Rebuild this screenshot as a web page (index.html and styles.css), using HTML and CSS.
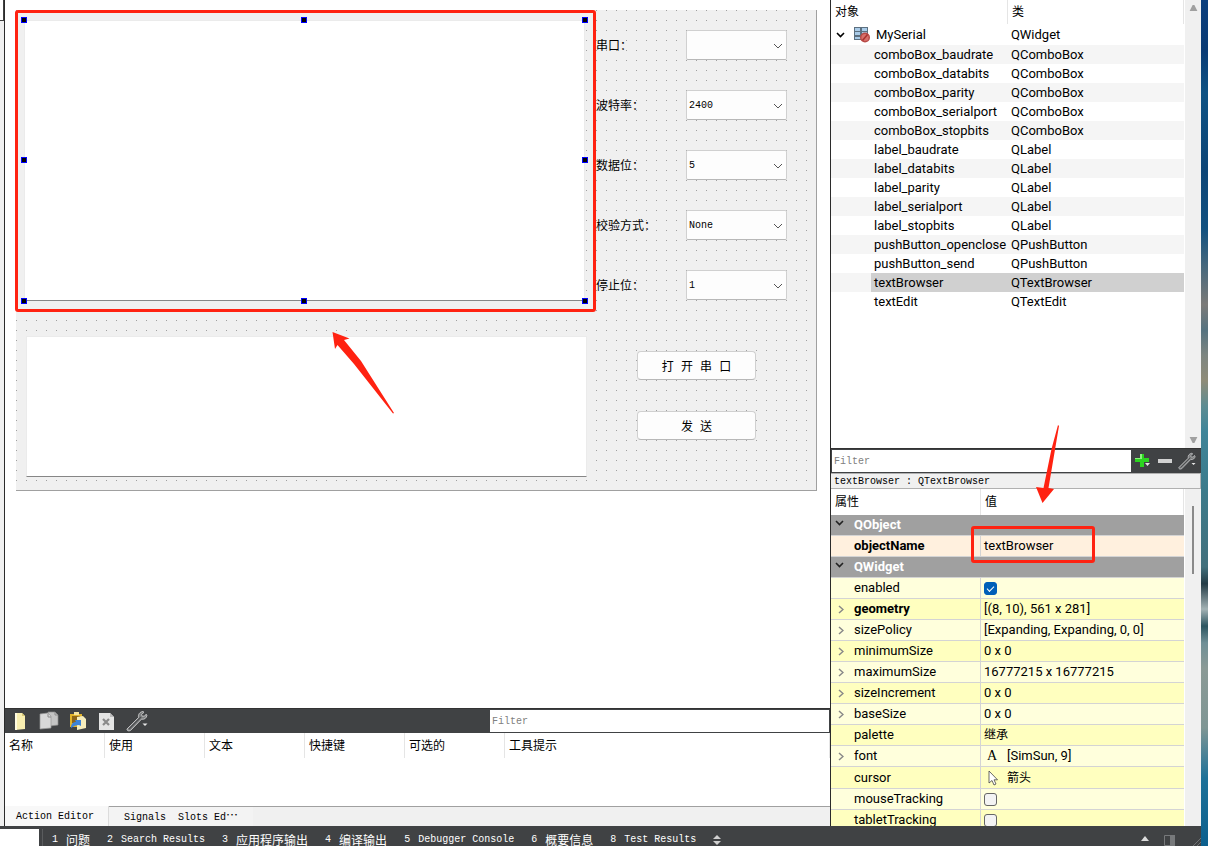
FILE: index.html
```html
<!DOCTYPE html>
<html lang="zh-CN">
<head>
<meta charset="utf-8">
<title>MySerial - Qt Creator</title>
<link rel="stylesheet" href="styles.css">
</head>
<body>
<svg class="defs" width="0" height="0" aria-hidden="true">
  <symbol id="down" viewBox="0 0 10 6"><path d="M1 1l4 4 4-4" fill="none" stroke="currentColor"/></symbol>
  <symbol id="open" viewBox="0 0 9 6"><path d="M1 1l3.500 3.500L8 1" fill="none" stroke="currentColor" stroke-width="1.600"/></symbol>
  <symbol id="closed" viewBox="0 0 6 9"><path d="M1 1l4 3.500L1 8" fill="none" stroke="currentColor" stroke-width="1.500"/></symbol>
  <symbol id="wrench" viewBox="0 0 22 22">
    <path d="M1 19 12.500 7.500C12 4.500 13.500 2 17 1.500l1 .8-2.500 2.200.8 1.800 2.500-.3 1.300-1.800.8 1c-.2 2.800-2.500 4.500-5.400 4L4.500 20.500C2.500 21.500.5 20.500 1 19z" fill="#7d7f80" stroke="#c9cacb" stroke-width=".9"/>
    <path d="M3 19 15 7" stroke="#4c4e50" stroke-width="1.200"/>
    <path d="M16.500 13.500h5l-2.500 2.500z" fill="#e6e6e6"/>
  </symbol>
</svg>
<div class="window">
  <main class="workspace">
    <div class="rail"><div class="rail-tab"></div></div>
    <div class="editor">
      <section class="canvas" aria-label="MySerial">
        <div class="form">
          <div class="form-left">
            <div class="browser selected">
              <textarea readonly aria-label="textBrowser"></textarea>
              <i class="handle n w"></i><i class="handle n c"></i><i class="handle n e"></i>
              <i class="handle m w"></i><i class="handle m e"></i>
              <i class="handle s w"></i><i class="handle s c"></i><i class="handle s e"></i>
              <div class="mark"></div>
            </div>
            <div class="edit">
              <textarea aria-label="textEdit"></textarea>
              <svg class="arrow-form" viewBox="0 0 64 84" width="64" height="84"><path d="M.5 1 17.500 7.500 12 9 29 30 62 82 61 82.500 22 33 5.500 14 3 18z" fill="#ff2211"/></svg>
            </div>
          </div>
          <div class="form-right">
            <div class="field"><label for="port">串口：</label><span class="combo"><select id="port"><option></option></select><svg width="10" height="6"><use href="#down"/></svg></span></div>
            <div class="field"><label for="baud">波特率：</label><span class="combo"><select id="baud"><option>2400</option></select><svg width="10" height="6"><use href="#down"/></svg></span></div>
            <div class="field"><label for="data">数据位：</label><span class="combo"><select id="data"><option>5</option></select><svg width="10" height="6"><use href="#down"/></svg></span></div>
            <div class="field"><label for="parity">校验方式：</label><span class="combo"><select id="parity"><option>None</option></select><svg width="10" height="6"><use href="#down"/></svg></span></div>
            <div class="field"><label for="stop">停止位：</label><span class="combo"><select id="stop"><option>1</option></select><svg width="10" height="6"><use href="#down"/></svg></span></div>
            <div class="buttons">
              <button class="push" type="button">打 开 串 口</button>
              <button class="push" type="button">发 送</button>
            </div>
          </div>
        </div>
      </section>
      <section class="actions">
        <div class="toolbar">
          <div class="tools">
            <button type="button" aria-label="新建"><svg width="20" height="20" viewBox="0 0 20 20"><path d="M5 2h7l3 3v13l-10 1z" fill="#f8eeb0"/><path d="M5 2h2v17H5z" fill="#fffbe0"/><path d="M12 2l3 3h-3z" fill="#d8c874"/></svg></button>
            <button type="button" aria-label="复制"><svg width="20" height="20" viewBox="0 0 20 20"><path d="M9 1h7l3 3v10l-8 1z" fill="#c4c4c4" stroke="#8c8c8c" stroke-width=".7"/><path d="M1 3l8-1 3 3v12l-11 1z" fill="#d8d8d8" stroke="#999" stroke-width=".7"/><path d="M9 3v3h3M16 1v3h3" fill="none" stroke="#8c8c8c"/></svg></button>
            <button type="button" aria-label="粘贴"><svg width="20" height="20" viewBox="0 0 20 20"><path d="M2 3h12v13H2z" fill="#e3b42a"/><path d="M6 1h5v3H6z" fill="#f4e3a0"/><path d="M4 5h8v7H4z" fill="#8d6518"/><path d="M9 6l6-1 3 3v9l-9 2z" fill="#f6edbc"/><path d="M3 17c0-4 2-6 5-6L7 9h6v6l-2-1c-3 0-5 1-8 3z" fill="#3c83d8"/></svg></button>
            <button type="button" aria-label="删除"><svg width="20" height="20" viewBox="0 0 20 20"><path d="M2 2h11l4 4v13H2z" fill="#e4e4e4"/><path d="M13 2v4h4" fill="#bbb"/><path d="M6 8l6 6M12 8l-6 6" stroke="#8a8a8a" stroke-width="2.200"/></svg></button>
            <button type="button" aria-label="配置"><svg width="22" height="22"><use href="#wrench"/></svg></button>
          </div>
          <input class="filter" type="text" placeholder="Filter" aria-label="Filter actions">
        </div>
        <table class="action-head"><thead><tr><th>名称</th><th>使用</th><th>文本</th><th>快捷键</th><th>可选的</th><th>工具提示</th></tr></thead></table>
        <div class="tabs" role="tablist">
          <button class="tab active" role="tab" type="button">Action Editor</button>
          <button class="tab" role="tab" type="button">Signals&nbsp; Slots Ed<span>⋯</span></button>
        </div>
      </section>
    </div>
    <aside class="side">
      <section class="tree">
        <div class="scroll-area">
        <table class="objects">
          <colgroup><col class="name"><col></colgroup>
          <thead><tr><th>对象</th><th>类</th></tr></thead>
          <tbody>
          <tr class="root"><td><div class="root-cell"><svg class="chev" width="9" height="6"><use href="#open"/></svg><svg width="16" height="16" viewBox="0 0 16 16"><path d="M0 0h14v13H0z" fill="#5c7080"/><path d="M1 1h5v3H1zM8 1h5v3H8zM1 5h5v3H1zM8 5h5v3H8zM1 10h6v2H1z" fill="#a9cbe8"/><circle cx="11" cy="10.500" r="4.300" fill="#d8706b" stroke="#b84a46" stroke-width="1.400"/><path d="M8.500 13.500l5-6" stroke="#a8312e" stroke-width="1.500"/></svg>MySerial</div></td><td>QWidget</td></tr>
          <tr><td>comboBox_baudrate</td><td>QComboBox</td></tr>
          <tr><td>comboBox_databits</td><td>QComboBox</td></tr>
          <tr><td>comboBox_parity</td><td>QComboBox</td></tr>
          <tr><td>comboBox_serialport</td><td>QComboBox</td></tr>
          <tr><td>comboBox_stopbits</td><td>QComboBox</td></tr>
          <tr><td>label_baudrate</td><td>QLabel</td></tr>
          <tr><td>label_databits</td><td>QLabel</td></tr>
          <tr><td>label_parity</td><td>QLabel</td></tr>
          <tr><td>label_serialport</td><td>QLabel</td></tr>
          <tr><td>label_stopbits</td><td>QLabel</td></tr>
          <tr><td>pushButton_openclose</td><td>QPushButton</td></tr>
          <tr><td>pushButton_send</td><td>QPushButton</td></tr>
          <tr class="current"><td>textBrowser</td><td>QTextBrowser</td></tr>
          <tr><td>textEdit</td><td>QTextEdit</td></tr>
          </tbody>
        </table>
        </div>
        <div class="scrollbar"><svg width="9" height="6" viewBox="0 0 9 7"><path d="M3.500 0h2L9 7H0z" fill="#a0a0a0"/></svg><svg width="9" height="6" viewBox="0 0 9 7"><path d="M0 0h9L5.500 7h-2z" fill="#a0a0a0"/></svg></div>
      </section>
      <div class="prop-bar">
        <input class="filter" type="text" placeholder="Filter" aria-label="Filter properties">
        <button type="button" aria-label="添加"><svg width="18" height="18" viewBox="0 0 18 18"><path d="M6 2h4v4h5v4h-5v5H6v-5H1V6h5z" fill="#2bd41f"/><path d="M6 2h2v5H1V6h5z" fill="#8bf07e"/><path d="M11 11h5l-2.500 3z" fill="#e6e6e6"/></svg></button>
        <button type="button" aria-label="移除"><svg width="16" height="16" viewBox="0 0 16 16"><path d="M1 6h14v4H1z" fill="#d2d2d2"/></svg></button>
        <button type="button" aria-label="配置"><svg width="18" height="18"><use href="#wrench"/></svg></button>
      </div>
      <div class="object-line">textBrowser : QTextBrowser</div>
      <section class="props">
        <div class="prop-area">
        <table class="properties">
          <colgroup><col class="name"><col></colgroup>
          <thead><tr><th>属性</th><th>值</th></tr></thead>
          <tbody>
          <tr class="group"><th colspan="2"><svg class="chev" width="9" height="6"><use href="#open"/></svg>QObject</th></tr>
          <tr class="peach"><td class="bold">objectName</td><td class="marked">textBrowser<div class="mark"></div><svg class="arrow-prop" viewBox="0 0 26 80" width="26" height="80"><path d="M23 0 24 1 13.500 63 19 64 7.500 78 1 62 8.500 63 16.500 24z" fill="#ff2211"/></svg></td></tr>
          <tr class="group"><th colspan="2"><svg class="chev" width="9" height="6"><use href="#open"/></svg>QWidget</th></tr>
          <tr><td><label for="enabled">enabled</label></td><td><input id="enabled" type="checkbox" checked></td></tr>
          <tr><td class="bold"><svg class="chev" width="6" height="9"><use href="#closed"/></svg>geometry</td><td>[(8, 10), 561 x 281]</td></tr>
          <tr><td><svg class="chev" width="6" height="9"><use href="#closed"/></svg>sizePolicy</td><td>[Expanding, Expanding, 0, 0]</td></tr>
          <tr><td><svg class="chev" width="6" height="9"><use href="#closed"/></svg>minimumSize</td><td>0 x 0</td></tr>
          <tr><td><svg class="chev" width="6" height="9"><use href="#closed"/></svg>maximumSize</td><td>16777215 x 16777215</td></tr>
          <tr><td><svg class="chev" width="6" height="9"><use href="#closed"/></svg>sizeIncrement</td><td>0 x 0</td></tr>
          <tr><td><svg class="chev" width="6" height="9"><use href="#closed"/></svg>baseSize</td><td>0 x 0</td></tr>
          <tr><td>palette</td><td class="zh">继承</td></tr>
          <tr><td><svg class="chev" width="6" height="9"><use href="#closed"/></svg>font</td><td><div class="with-icon"><span class="serif-a">A</span>[SimSun, 9]</div></td></tr>
          <tr class="tall"><td>cursor</td><td class="zh"><div class="with-icon"><svg width="16" height="16" viewBox="0 0 16 16"><path d="M5 1v12l3-2.500 2 4.500 2-1-2-4.200h3.500z" fill="#fff" stroke="#444" stroke-width=".8"/></svg>箭头</div></td></tr>
          <tr><td><label for="mouse">mouseTracking</label></td><td><input id="mouse" type="checkbox"></td></tr>
          <tr><td><label for="tablet">tabletTracking</label></td><td><input id="tablet" type="checkbox"></td></tr>
          </tbody>
        </table>
        </div>
        <div class="scrollbar thin"><div class="thumb"></div></div>
      </section>
    </aside>
  </main>
  <footer class="status">
    <input class="locator" type="text" aria-label="Locator">
    <nav class="panes">
      <button type="button">1<span>问题</span></button>
      <button type="button">2<span class="latin">Search Results</span></button>
      <button type="button">3<span>应用程序输出</span></button>
      <button type="button">4<span>编译输出</span></button>
      <button type="button">5<span class="latin">Debugger Console</span></button>
      <button type="button">6<span>概要信息</span></button>
      <button type="button">8<span class="latin">Test Results</span></button>
      <button type="button" aria-label="更多"><svg width="8" height="10" viewBox="0 0 8 10"><path d="M4 0l4 4H0zM0 6h8l-4 4z" fill="#d0d0d0"/></svg></button>
    </nav>
    <div class="corner">
      <svg width="8" height="5" viewBox="0 0 8 5"><path d="M4 0l4 5H0z" fill="#dcdcdc"/></svg>
      <svg width="11" height="11" viewBox="0 0 11 11"><path d="M.5.5h10v10H.5z" fill="none" stroke="#77797b"/><path d="M6 0h5v11H6z" fill="#77797b"/></svg>
      <svg class="grip" width="8" height="8" viewBox="0 0 8 8"><path d="M0 8l8-8M4 8l4-4" stroke="#707274"/></svg>
    </div>
  </footer>
</div>
<div class="wallpaper"></div>
</body>
</html>
```
FILE: styles.css
```css
* { box-sizing: border-box; }
body {
  margin: 0;
  height: 100vh;
  display: flex;
  overflow: hidden;
  background: #fff;
  color: #000;
  font: 13px/18px Roboto, "Noto Sans CJK SC", sans-serif;
}
button, input, select, textarea { font: inherit; color: inherit; margin: 0; padding: 0; border: 0; border-radius: 0; background: none; outline: 0; }
svg { display: block; flex: none; }
.defs { position: absolute; }
table { border-collapse: separate; border-spacing: 0; table-layout: fixed; width: 100%; }
th, td { padding: 0; text-align: left; font-weight: 400; white-space: nowrap; }

.window { flex: 1; min-width: 0; display: flex; flex-direction: column; }
.wallpaper {
  width: 7px;
  background: linear-gradient(#0b3f7d 0, #0a3b74 6%, #0e5283 11%, #0d4576 20%, #11507f 27%, #4c6a7c 32%, #7b7a78 36%, #55727f 39%, #7d8580 42%, #8f8c78 45%, #5d8c92 48%, #3f8599 51%, #3c7a8a 58%, #42707c 67%, #243c46 69%, #a3b2b4 72%, #2c5560 74%, #6f8f96 76%, #8b9a96 79%, #7f9694 86%, #1d7198 92%, #0c5f8d 100%);
}
.workspace { flex: 1; min-height: 0; display: flex; }
.rail { width: 5px; background: #f0f0f0; border-right: 1px solid #2b2b2b; }
.rail-tab { height: 21px; background: #fff; border: solid #404040; border-width: 0 1px 1px 0; }
.editor { flex: 1; min-width: 0; display: flex; flex-direction: column; }

/* form being designed */
.canvas { flex: 1; min-height: 0; padding: 10px 13px 0 11px; }
.form {
  display: flex;
  gap: 9px;
  padding: 10px 0 13px 8px;
  border: solid #a0a0a0;
  border-width: 0 1px 1px 0;
  background-color: #f0f0f0;
  background-image: linear-gradient(to right, transparent 1px, #f0f0f0 1px), linear-gradient(#a0a0a0 1px, #f0f0f0 1px);
  background-size: 10px 10px;
  font: 12px/18px "Liberation Mono", "Noto Sans CJK SC", monospace;
}
.form-left { flex: 1; min-width: 0; display: flex; flex-direction: column; gap: 35px; }
.browser, .edit { position: relative; }
.browser { margin-right: 2px; }
.edit { margin-left: 2px; }
textarea { display: block; width: 100%; resize: none; background: #fff; border: 1px solid #ebebeb; border-bottom-color: #868686; }
.browser textarea { height: 281px; }
.edit textarea { height: 141px; }
.handle { position: absolute; width: 6px; height: 6px; background: #000; border: 1px solid #00f; }
.handle.n { top: -3px; }
.handle.m { top: calc(50% - 4px); }
.handle.s { bottom: -3px; }
.handle.w { left: -3px; }
.handle.c { left: calc(50% - 4px); }
.handle.e { right: -3px; }
.mark { position: absolute; border: 3px solid #ff2211; border-radius: 3px; pointer-events: none; }
.browser .mark { inset: -10px -11px -11px -9px; }
.arrow-form { position: absolute; left: 306px; top: -5px; }
.form-right { width: 220px; padding: 10px 29px 0 0; display: flex; flex-direction: column; gap: 30px; }
.field { display: flex; justify-content: space-between; align-items: center; }
.field label { padding-top: 4px; }
.combo { position: relative; width: 101px; }
.combo select { appearance: none; display: block; width: 100%; height: 30px; padding: 2px 20px 0 2px; background: #fdfdfd; border: 1px solid #d0d0d0; border-bottom-color: #b8b8b8; border-radius: 2px; font-size: 10px; }
.combo svg { position: absolute; right: 4px; top: 13px; color: #555; pointer-events: none; }
.buttons { display: flex; flex-direction: column; gap: 31px; padding: 21px 31px 0 41px; }
.push { height: 29px; padding-top: 4px; background: #fdfdfd; border: 1px solid #d0d0d0; border-bottom-color: #b8b8b8; border-radius: 4px; font: 12px/18px "Liberation Mono", "Noto Sans CJK SC", monospace; }

/* action editor */
.actions { display: flex; flex-direction: column; height: 118px; }
.toolbar { display: flex; justify-content: space-between; background: #404244; border-top: 1px solid #333; padding: 1px 1px 1px 5px; }
.tools { display: flex; align-items: center; gap: 9px; }
.filter { height: 22px; background: #fff; padding: 1px 2px 0; font: 10px/18px "Liberation Mono", monospace; }
.filter::placeholder { color: #808080; opacity: 1; }
.toolbar .filter { flex: 0 0 339px; }
.action-head th { width: 100px; height: 25px; padding: 0 4px; font-size: 12px; border-right: 1px solid #e5e5e5; }
.action-head th:last-child { width: auto; }
.tabs { margin-top: auto; display: flex; height: 20px; background: #f0f0f0; border-top: 1px solid #a0a0a0; font: 10px/20px "Liberation Mono", monospace; }
.tab { padding: 0 15px; background: #f3f3f3; }
.tab span { font: 12px/16px "Noto Sans CJK SC", sans-serif; }
.tab.active { width: 104px; padding: 1px 0 0 11px; text-align: left; margin-top: -1px; background: #f8f8f8; border-right: 1px solid #dcdcdc; }

/* object tree and property editor */
.side { flex: 0 0 371px; display: grid; grid-template-rows: minmax(0, 448fr) auto auto minmax(0, 337fr); border-left: 1px solid #2b2b2b; background: #fff; }
.tree, .props { display: flex; min-height: 0; }
.scroll-area, .prop-area { flex: 1; min-width: 0; padding-right: 1px; }
.scroll-area { overflow: hidden; }
.props { clip-path: inset(-80px 0 0 0); }
.scrollbar { width: 16px; background: #f0f0f0; display: flex; flex-direction: column; justify-content: space-between; align-items: center; padding: 5px 0; }
.scrollbar.thin { padding: 17px 0 0; }
.thumb { width: 2px; height: 68px; background: #8a8a8a; }
.objects .name { width: 177px; }
.objects th { height: 24px; padding-left: 4px; font-size: 12px; border-right: 1px solid #e5e5e5; }
.objects td { height: 19px; padding-left: 3px; line-height: 18px; }
.objects td:first-child { padding-left: 43px; }
.objects .root td { height: 21px; }
.objects .root td:first-child { padding-left: 5px; }
.root-cell { display: flex; align-items: center; gap: 6px; }
.root-cell .chev { margin-right: 3px; }
.objects tbody tr:nth-child(even) { background: #f5f5f5; }
.objects .current td { background: #d0d0d0; }
.objects .current td:first-child { background: linear-gradient(to right, #f5f5f5 40px, #d0d0d0 40px); }
.prop-bar { display: flex; align-items: center; gap: 1px; background: #404244; padding: 1px 3px 1px 1px; border-top: 1px solid #333; }
.prop-bar .filter { flex: 1; min-width: 0; }
.prop-bar button { padding: 0 2px; }
.object-line { height: 16px; padding-left: 3px; background: #f0f0f0; border: 1px solid #b0b0b0; border-left: 0; font: 10px/16px "Liberation Mono", monospace; }
.properties .name { width: 150px; }
.properties thead th { height: 26px; padding-left: 4px; font-size: 12px; border-right: 1px solid #e5e5e5; }
.properties td, .properties .group th { height: 21px; line-height: 18px; border-bottom: 1px solid #d4d4d4; }
.properties td { padding-left: 3px; }
.properties td:first-child { padding-left: 23px; border-right: 1px solid #d4d4d4; }
.properties tbody tr { background: #ffffbf; }
.properties tbody tr:nth-child(even) { background: #ffffdc; }
.properties tbody tr.peach { background: #fff0de; }
.properties tbody tr.group { background: #a0a0a0; }
.properties .group th { padding-left: 23px; color: #fff; font-weight: 700; }
.properties .group .chev { float: left; margin: 4px 0 0 -19px; color: #222; }
.properties td .chev { float: left; margin: 5px 0 0 -16px; color: #888; }
.bold { font-weight: 700; }
.zh { font-size: 12px; }
.properties .tall td { height: 22px; }
.marked { position: relative; }
.marked .mark { left: -10px; top: -10px; width: 124px; height: 37px; }
.arrow-prop { position: absolute; left: 54px; top: -111px; }
.with-icon { display: flex; align-items: center; gap: 7px; }
.serif-a { width: 16px; text-align: center; font: 14px/16px "Liberation Serif", serif; }
input[type="checkbox"] { appearance: none; display: block; width: 13px; height: 13px; background: #f3f3f3; border: 1px solid #666; border-radius: 3px; }
input[type="checkbox"]:checked { background: #005fb8; border-color: #005fb8; }
input[type="checkbox"]:checked::after { content: ""; display: block; width: 6px; height: 3px; margin: 3px auto 0; border: solid #fff; border-width: 0 0 1px 1px; transform: rotate(-45deg); }

/* status bar */
.status { height: 20px; flex: none; display: flex; background: #404244; color: #fff; overflow: hidden; }
.locator { width: 39px; height: 17px; margin-top: 3px; background: #fff; }
.panes { flex: 1; display: flex; gap: 17px; margin: 3px 0 0 3px; padding-left: 9px; border-left: 1px solid #5a5c5e; font: 10px/24px "Liberation Mono", monospace; }
.panes button { display: flex; align-items: center; gap: 8px; height: 22px; }
.panes span { font: 12px/22px "Noto Sans CJK SC", sans-serif; }
.panes .latin { font: 10px/24px "Liberation Mono", monospace; }
.corner { display: flex; align-items: flex-end; gap: 15px; }
.corner svg:first-child { margin-bottom: 5px; }
.corner .grip { margin-left: 3px; }
```
